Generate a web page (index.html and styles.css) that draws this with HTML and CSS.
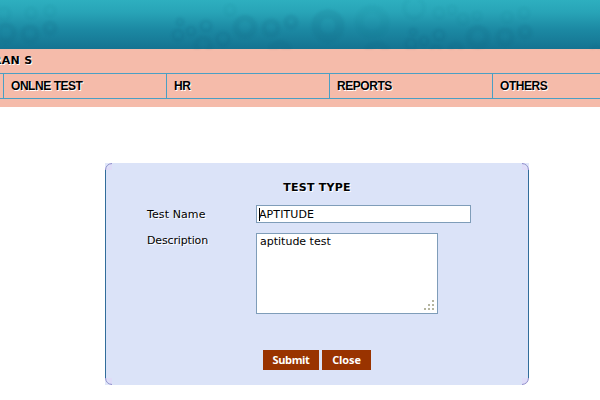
FILE: index.html
```
<!DOCTYPE html>
<html lang="en">
<head>
<meta charset="utf-8">
<title>Test Type</title>
<link rel="stylesheet" href="styles.css">
</head>
<body>
<header class="banner">
<svg class="bubbles" width="600" height="49" viewBox="0 0 600 49" fill="none" stroke="#12627f">
<g stroke-width="5" opacity=".14">
<circle cx="6" cy="33" r="8"/><circle cx="30" cy="34" r="7"/><circle cx="50" cy="28" r="5"/>
<circle cx="245" cy="27" r="9" stroke-width="6"/><circle cx="271" cy="28" r="7"/><circle cx="291" cy="22" r="5"/>
<circle cx="328" cy="26" r="12" stroke-width="9"/><circle cx="478" cy="37" r="9" stroke-width="6"/><circle cx="505" cy="37" r="7"/><circle cx="525" cy="32" r="5"/>
<circle cx="203" cy="45" r="7"/><circle cx="280" cy="52" r="8" stroke-width="8"/><circle cx="377" cy="54" r="10" stroke-width="6"/><circle cx="456" cy="49" r="5"/>
</g>
<g stroke-width="3" opacity=".15">
<circle cx="178" cy="35" r="5"/><circle cx="191" cy="31" r="4"/><circle cx="180" cy="22" r="3"/><circle cx="223" cy="39" r="6"/>
<circle cx="206" cy="26" r="5"/><circle cx="411" cy="44" r="5"/><circle cx="424" cy="41" r="4"/><circle cx="439" cy="35" r="5"/><circle cx="413" cy="32" r="3"/><circle cx="436" cy="51" r="5"/><circle cx="596" cy="50" r="4"/>
</g>
<g stroke-width="3" opacity=".05">
<circle cx="31" cy="13" r="5"/><circle cx="50" cy="11" r="5"/><circle cx="4" cy="14" r="6"/><circle cx="230" cy="10" r="5"/><circle cx="372" cy="22" r="13" stroke-width="8"/>
<circle cx="414" cy="8" r="10"/><circle cx="439" cy="13" r="5"/><circle cx="452" cy="10" r="4"/><circle cx="463" cy="19" r="5"/><circle cx="477" cy="16" r="4"/><circle cx="507" cy="17" r="5"/><circle cx="524" cy="13" r="5"/>
</g>
</svg>
</header>
<div class="strip">
<div class="user"><span>RAN S</span></div>
<nav class="menu">
<a class="stub"></a><a>ONLNE TEST</a><a>HR</a><a>REPORTS</a><a>OTHERS</a>
</nav>
</div>
<main class="panel">
<svg class="corner tl" width="7" height="7"><path d="M0 0H7V7H0Z" fill="#dfdcf8"/><path d="M0 0H7L0 7Z" fill="#e0e7f9"/><path d="M.5 7Q1 1 7 .5" fill="none" stroke="#8f8dcb"/></svg>
<svg class="corner tr" width="7" height="7"><path d="M0 0H7V7H0Z" fill="#dfdcf8"/><path d="M0 0H7L0 7Z" fill="#e0e7f9"/><path d="M.5 7Q1 1 7 .5" fill="none" stroke="#8f8dcb"/></svg>
<svg class="corner bl" width="7" height="7"><path d="M0 0H7V7H0Z" fill="#dfdcf8"/><path d="M0 0H7L0 7Z" fill="#e0e7f9"/><path d="M.5 7Q1 1 7 .5" fill="none" stroke="#8f8dcb"/></svg>
<svg class="corner br" width="7" height="7"><path d="M0 0H7V7H0Z" fill="#dfdcf8"/><path d="M0 0H7V.5Q1 .5 .5 7H0Z" fill="#fff"/><path d="M.5 7Q1 1 7 .5" fill="none" stroke="#8f8dcb"/></svg>
<h1 class="title">TEST TYPE</h1>
<div class="row name-row"><label class="label l1">Test Name</label><div class="field name"><span>APTITUDE</span><i class="caret"></i></div></div>
<div class="row"><label class="label l2">Description</label><div class="field desc"><span>aptitude test</span>
<svg class="grip" width="10" height="10" fill="#b5b59f"><path d="M8 0h2v2h-2zM4 4h2v2h-2zM8 4h2v2h-2zM0 8h2v2h-2zM4 8h2v2h-2zM8 8h2v2h-2z"/></svg></div></div>
<div class="actions"><button class="btn submit">Submit</button><button class="btn close">Close</button></div>
</main>
</body>
</html>
```
FILE: styles.css
```
* { box-sizing: border-box; }
body {
  margin: 0;
  width: 600px;
  height: 400px;
  overflow: hidden;
  background: #fff;
  color: #000;
  font: 11px/14px "DejaVu Sans", sans-serif;
}
.banner {
  height: 49px;
  background: linear-gradient(#2eafbf 0, #28a4b7 25%, #1c89a3 60%, #147391 100%);
}
.bubbles { display: block; filter: blur(.8px); }
.strip {
  height: 58px;
  background: #f5bbaa;
}
.user {
  height: 24px;
  padding-top: 5px;
  font-weight: bold;
  text-shadow: 1px 1px 0 #fff;
}
.user span { display: block; margin-left: -7px; letter-spacing: .3px; }
.menu {
  display: flex;
  height: 26px;
  overflow: hidden;
  border-top: 1px solid #4a9fc4;
  border-bottom: 1px solid #4a9fc4;
}
.menu a {
  flex: none;
  width: 163px;
  padding-left: 7px;
  border-left: 1px solid #4a9fc4;
  font: bold 12px/24px "Liberation Sans", sans-serif;
  letter-spacing: -.45px;
  text-shadow: 1px 1px 0 #fff;
}
.menu a.stub { width: 3px; padding: 0; border: 0; }
.menu a:last-child { flex: 1; }
.panel {
  position: relative;
  width: 424px;
  height: 222px;
  margin: 56px 0 0 105px;
  border: solid #316d9b;
  border-width: 0 1px;
  background: #dbe3f8;
}
.corner { position: absolute; }
.tl { left: -1px; top: 0; }
.tr { right: -1px; top: 0; transform: scaleX(-1); }
.bl { left: -1px; bottom: 0; transform: scaleY(-1); }
.br { right: -1px; bottom: 0; transform: scale(-1); }
.title {
  margin: 0;
  padding-top: 18px;
  height: 42px;
  font-size: 11px;
  line-height: 14px;
  letter-spacing: .25px;
  text-align: center;
  text-shadow: 1px 1px 0 #fff;
}
.row { display: flex; padding-left: 41px; }
.name-row { height: 28px; }
.label {
  width: 109px;
  flex: none;
  text-shadow: 1px 1px 0 #fff;
}
.l1 { padding-top: 3px; letter-spacing: .1px; }
.l2 { padding-top: 1px; letter-spacing: -.15px; }
.field {
  position: relative;
  border: 1px solid #7f9db9;
  background: #fff;
  padding-left: 2px;
}
.name { width: 215px; height: 18px; padding-top: 2px; letter-spacing: .1px; }
.desc { width: 182px; height: 81px; padding: 1px 0 0 3px; }
.caret {
  position: absolute;
  left: 2px;
  top: 2px;
  width: 1px;
  height: 13px;
  background: #000;
}
.grip { position: absolute; right: 3px; bottom: 3px; }
.actions {
  display: flex;
  gap: 3px;
  padding: 36px 0 0 157px;
}
.btn {
  height: 20px;
  padding: 0;
  border: 0;
  background: #993300;
  color: #fff;
  font: bold 11px/20px "Open Sans", sans-serif;
}
.submit { width: 56px; letter-spacing: -.4px; }
.close { width: 49px; letter-spacing: -.1px; }
```
